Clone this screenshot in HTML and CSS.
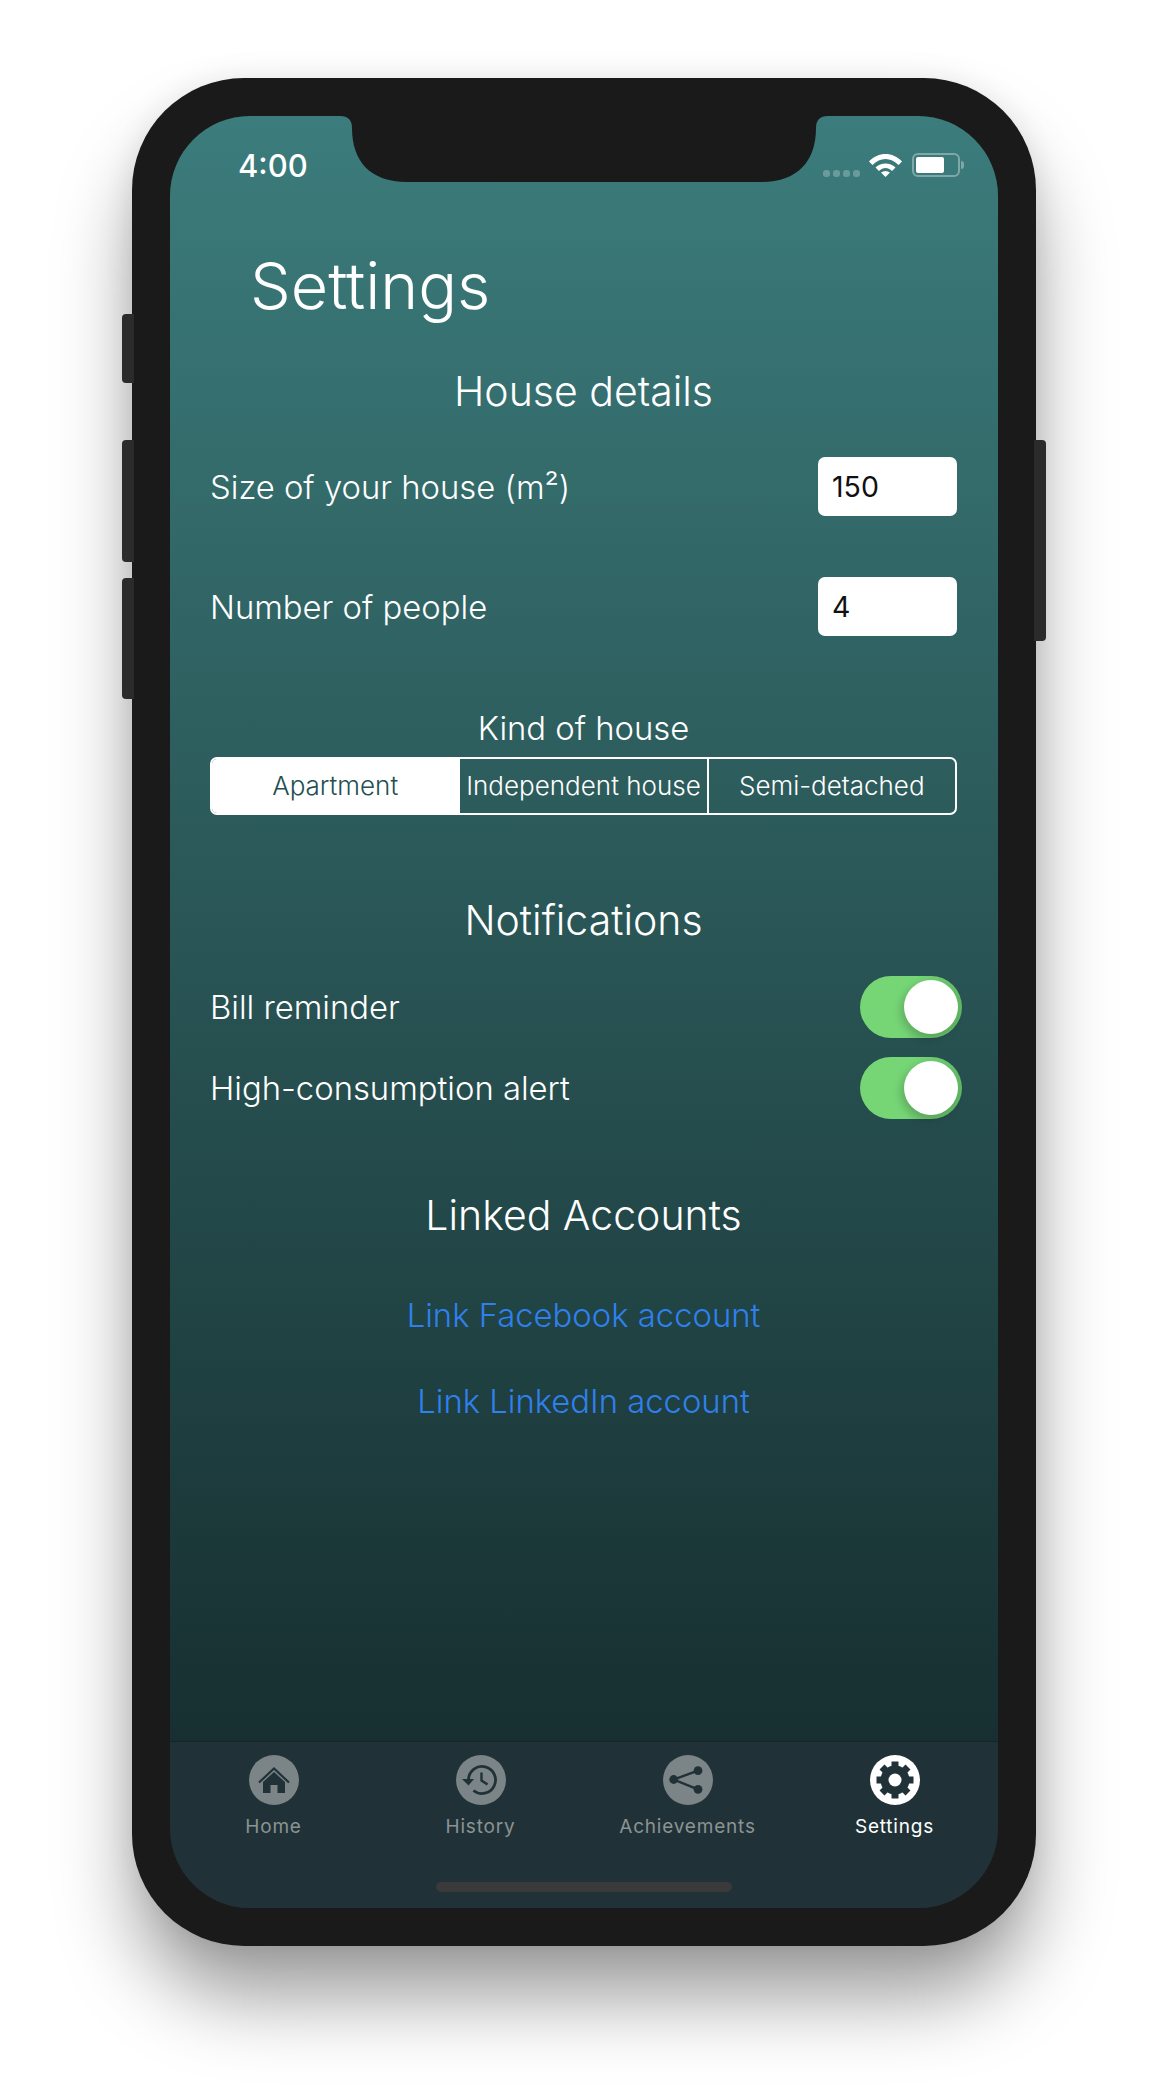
FILE: index.html
```html
<!DOCTYPE html>
<html lang="en">
<head>
    <meta charset="UTF-8">
    <meta name="viewport" content="width=device-width, initial-scale=1.0">
    <title>Settings</title>
    <link rel="stylesheet" href="styles.css">
</head>
<body>
    <div class="phone">
        <span class="side-btn mute"></span>
        <span class="side-btn vol-up"></span>
        <span class="side-btn vol-down"></span>
        <span class="side-btn power"></span>

        <div class="screen">
            <svg class="notch" width="488" height="66" viewBox="0 0 488 66">
                <path d="M0 0Q12 0 12 12C12 45 30 66 67 66H421C458 66 476 45 476 12Q476 0 488 0Z" fill="#1a1a1a"/>
            </svg>

            <div class="content">
                <div class="status-bar">
                    <span class="time">4:00</span>
                    <div class="status-icons">
                        <div class="signal"><i></i><i></i><i></i><i></i></div>
                        <svg width="33" height="24" viewBox="0 0 33 24">
                            <path d="M0 8.500C9 -1.500 24 -1.500 33 8.500L29.500 12C22 4 11 4 3.500 12Z" fill="#fff"/>
                            <path d="M6.500 14.500C12 9 21 9 26.500 14.500L23 18C19 14 14 14 10 18Z" fill="#fff"/>
                            <path d="M12 19.500C15 17.500 18 17.500 21 19.500L16.500 24Z" fill="#fff"/>
                        </svg>
                        <div class="battery"><div class="battery-fill"></div></div>
                        <span class="battery-tip"></span>
                    </div>
                </div>

                <h1 class="title">Settings</h1>

                <h2 class="section-title">House details</h2>
                <div class="field-row">
                    <span class="label">Size of your house (m²)</span>
                    <div class="input">150</div>
                </div>
                <div class="field-row second">
                    <span class="label">Number of people</span>
                    <div class="input">4</div>
                </div>

                <h3 class="sub-title">Kind of house</h3>
                <div class="segments">
                    <div class="segment active">Apartment</div>
                    <div class="segment">Independent house</div>
                    <div class="segment">Semi-detached</div>
                </div>

                <h2 class="section-title notifications">Notifications</h2>
                <div class="switch-row">
                    <span class="label">Bill reminder</span>
                    <div class="switch"><div class="knob"></div></div>
                </div>
                <div class="switch-row">
                    <span class="label">High-consumption alert</span>
                    <div class="switch"><div class="knob"></div></div>
                </div>

                <h2 class="section-title linked">Linked Accounts</h2>
                <a class="link" href="#">Link Facebook account</a>
                <a class="link" href="#">Link LinkedIn account</a>
            </div>

            <div class="tab-bar">
                <div class="tab">
                    <svg class="tab-icon" viewBox="0 0 50 50">
                        <circle cx="25" cy="25" r="25" fill="currentColor"/>
                        <path d="M10 27.500L25 13.500L40 27.500" fill="none" stroke="#203237" stroke-width="2.200"/>
                        <path d="M14 38V27L25 17L36 27V38H28.500V30H21.500V38Z" fill="#203237"/>
                    </svg>
                    <span>Home</span>
                </div>
                <div class="tab">
                    <svg class="tab-icon" viewBox="0 0 50 50">
                        <circle cx="25" cy="25" r="25" fill="currentColor"/>
                        <path d="M12.500 24.500A13.500 13.500 0 1 1 17.500 35.500" fill="none" stroke="#203237" stroke-width="2.800"/>
                        <path d="M6 24H18L12.500 30.500Z" fill="#203237"/>
                        <path d="M25.500 17.500V25.500L31.500 29.500" fill="none" stroke="#203237" stroke-width="2.400"/>
                    </svg>
                    <span>History</span>
                </div>
                <div class="tab">
                    <svg class="tab-icon" viewBox="0 0 50 50">
                        <circle cx="25" cy="25" r="25" fill="currentColor"/>
                        <path d="M35 15.700L10.700 24.500L35 34.300" fill="none" stroke="#203237" stroke-width="2.400"/>
                        <circle cx="35" cy="15.700" r="4.400" fill="#203237"/>
                        <circle cx="10.700" cy="24.500" r="4.400" fill="#203237"/>
                        <circle cx="35" cy="34.300" r="4.400" fill="#203237"/>
                    </svg>
                    <span>Achievements</span>
                </div>
                <div class="tab current">
                    <svg class="tab-icon" viewBox="0 0 50 50">
                        <circle cx="25" cy="25" r="25" fill="currentColor"/>
                        <circle cx="25" cy="25" r="14.500" fill="#203237"/>
                        <path d="M25 6.500V43.500M6.500 25H43.500M12 12L38 38M38 12L12 38" stroke="#203237" stroke-width="7"/>
                        <circle cx="25" cy="25" r="6.500" fill="currentColor"/>
                    </svg>
                    <span>Settings</span>
                </div>
                <div class="home-bar"></div>
            </div>
        </div>
    </div>
</body>
</html>
```

FILE: styles.css
```css
body {
    margin: 0;
    height: 2096px;
    overflow: hidden;
    background: #fff;
    font-family: Inter, "Noto Sans", sans-serif;
    color: #fff;
}
.phone {
    position: relative;
    box-sizing: border-box;
    width: 904px;
    height: 1868px;
    margin: 78px auto 0;
    padding: 38px;
    background: #1a1a1a;
    border-radius: 112px;
    box-shadow: 0 55px 80px -5px rgba(0, 0, 0, 0.4), 0 0 30px rgba(0, 0, 0, 0.08);
}
.side-btn {
    position: absolute;
    width: 12px;
    background: #2b2b2b;
    border-radius: 4px 0 0 4px;
}
.mute { left: -10px; top: 236px; height: 69px; }
.vol-up { left: -10px; top: 362px; height: 122px; }
.vol-down { left: -10px; top: 500px; height: 121px; }
.power { right: -10px; top: 362px; height: 201px; border-radius: 0 4px 4px 0; }

.screen {
    position: relative;
    display: flex;
    flex-direction: column;
    height: 100%;
    overflow: hidden;
    border-radius: 80px;
    background: #203237;
}
.notch {
    position: absolute;
    left: 170px;
    top: 0;
}
.content {
    flex: 1;
    box-sizing: border-box;
    padding: 0 41px 0 40px;
    background: linear-gradient(#3c7c7c, #172f30);
}
.status-bar {
    display: flex;
    justify-content: space-between;
    align-items: center;
    height: 24px;
    padding-top: 37px;
    margin: 0 -7px 0 28px;
}
.time {
    font-size: 31px;
    font-weight: 500;
}
.status-icons {
    display: flex;
    align-items: center;
    height: 24px;
}
.signal {
    display: flex;
    gap: 3px;
    margin: 17px 9px 0 0;
}
.signal i {
    width: 7px;
    height: 7px;
    border-radius: 3px;
    background: rgba(255, 255, 255, 0.25);
}
.battery {
    box-sizing: border-box;
    width: 48px;
    height: 24px;
    margin-left: 10px;
    padding: 2px;
    border: 2px solid rgba(255, 255, 255, 0.35);
    border-radius: 6px;
}
.battery-fill {
    width: 28px;
    height: 100%;
    background: #fff;
    border-radius: 2px;
}
.battery-tip {
    width: 3px;
    height: 8px;
    margin-left: 1px;
    background: rgba(255, 255, 255, 0.35);
    border-radius: 0 3px 3px 0;
}
.title {
    margin: 71px 0 0 40px;
    font-size: 64.500px;
    line-height: 76px;
    font-weight: 300;
}
.section-title {
    margin: 42px 0 0;
    font-size: 41px;
    line-height: 50px;
    font-weight: 350;
    text-align: center;
}
.notifications { margin-top: 80px; }
.linked { margin-top: 71px; }
.field-row, .switch-row {
    display: flex;
    justify-content: space-between;
    align-items: center;
}
.field-row { margin-top: 41px; }
.field-row.second { margin-top: 61px; }
.label {
    font-size: 32.800px;
    font-weight: 350;
}
.input {
    box-sizing: border-box;
    width: 139px;
    height: 59px;
    padding-left: 14px;
    background: #fff;
    color: #111;
    border-radius: 7px;
    font-size: 28.500px;
    line-height: 59px;
}
.sub-title {
    margin: 72px 0 0;
    font-size: 32.800px;
    line-height: 40px;
    font-weight: 350;
    text-align: center;
}
.segments {
    display: flex;
    box-sizing: border-box;
    height: 58px;
    margin-top: 9px;
    border: 2px solid #fff;
    border-radius: 7px;
    overflow: hidden;
}
.segment {
    flex: 1 1 0;
    box-sizing: border-box;
    font-size: 26px;
    font-weight: 350;
    line-height: 54px;
    text-align: center;
    white-space: nowrap;
}
.segment + .segment { border-left: 2px solid #fff; }
.segment.active {
    background: #fff;
    color: #234f51;
}
.switch-row {
    height: 62px;
    margin-top: 19px;
}
.notifications + .switch-row { margin-top: 31px; }
.switch {
    position: relative;
    width: 102px;
    height: 62px;
    margin-right: -5px;
    background: linear-gradient(100deg, #76d676 50%, #5fb662);
    border-radius: 31px;
}
.knob {
    position: absolute;
    right: 4px;
    top: 4px;
    width: 54px;
    height: 54px;
    background: #fff;
    border-radius: 50%;
    box-shadow: -3px 4px 10px rgba(0, 0, 0, 0.2);
}
.link {
    display: block;
    margin-top: 46px;
    font-size: 32.800px;
    font-weight: 350;
    line-height: 40px;
    text-align: center;
    color: #2f80ed;
    text-decoration: none;
}
.linked + .link { margin-top: 55px; }
.tab-bar {
    position: relative;
    display: flex;
    flex: none;
    height: 166px;
    background: #203237;
    box-shadow: 0 -1px 0 #132628;
}
.tab {
    flex: 1;
    display: flex;
    flex-direction: column;
    align-items: center;
    padding-top: 13px;
    color: #7b8486;
    font-size: 19px;
    letter-spacing: 0.800px;
}
.tab span { color: #8b9393; margin-top: 10px; }
.tab.current { color: #fff; }
.tab.current span { color: #fff; }
.tab-icon {
    width: 50px;
    height: 50px;
}
.home-bar {
    position: absolute;
    left: 266px;
    bottom: 16px;
    width: 296px;
    height: 10px;
    background: #3a3a3a;
    border-radius: 5px;
}
```
